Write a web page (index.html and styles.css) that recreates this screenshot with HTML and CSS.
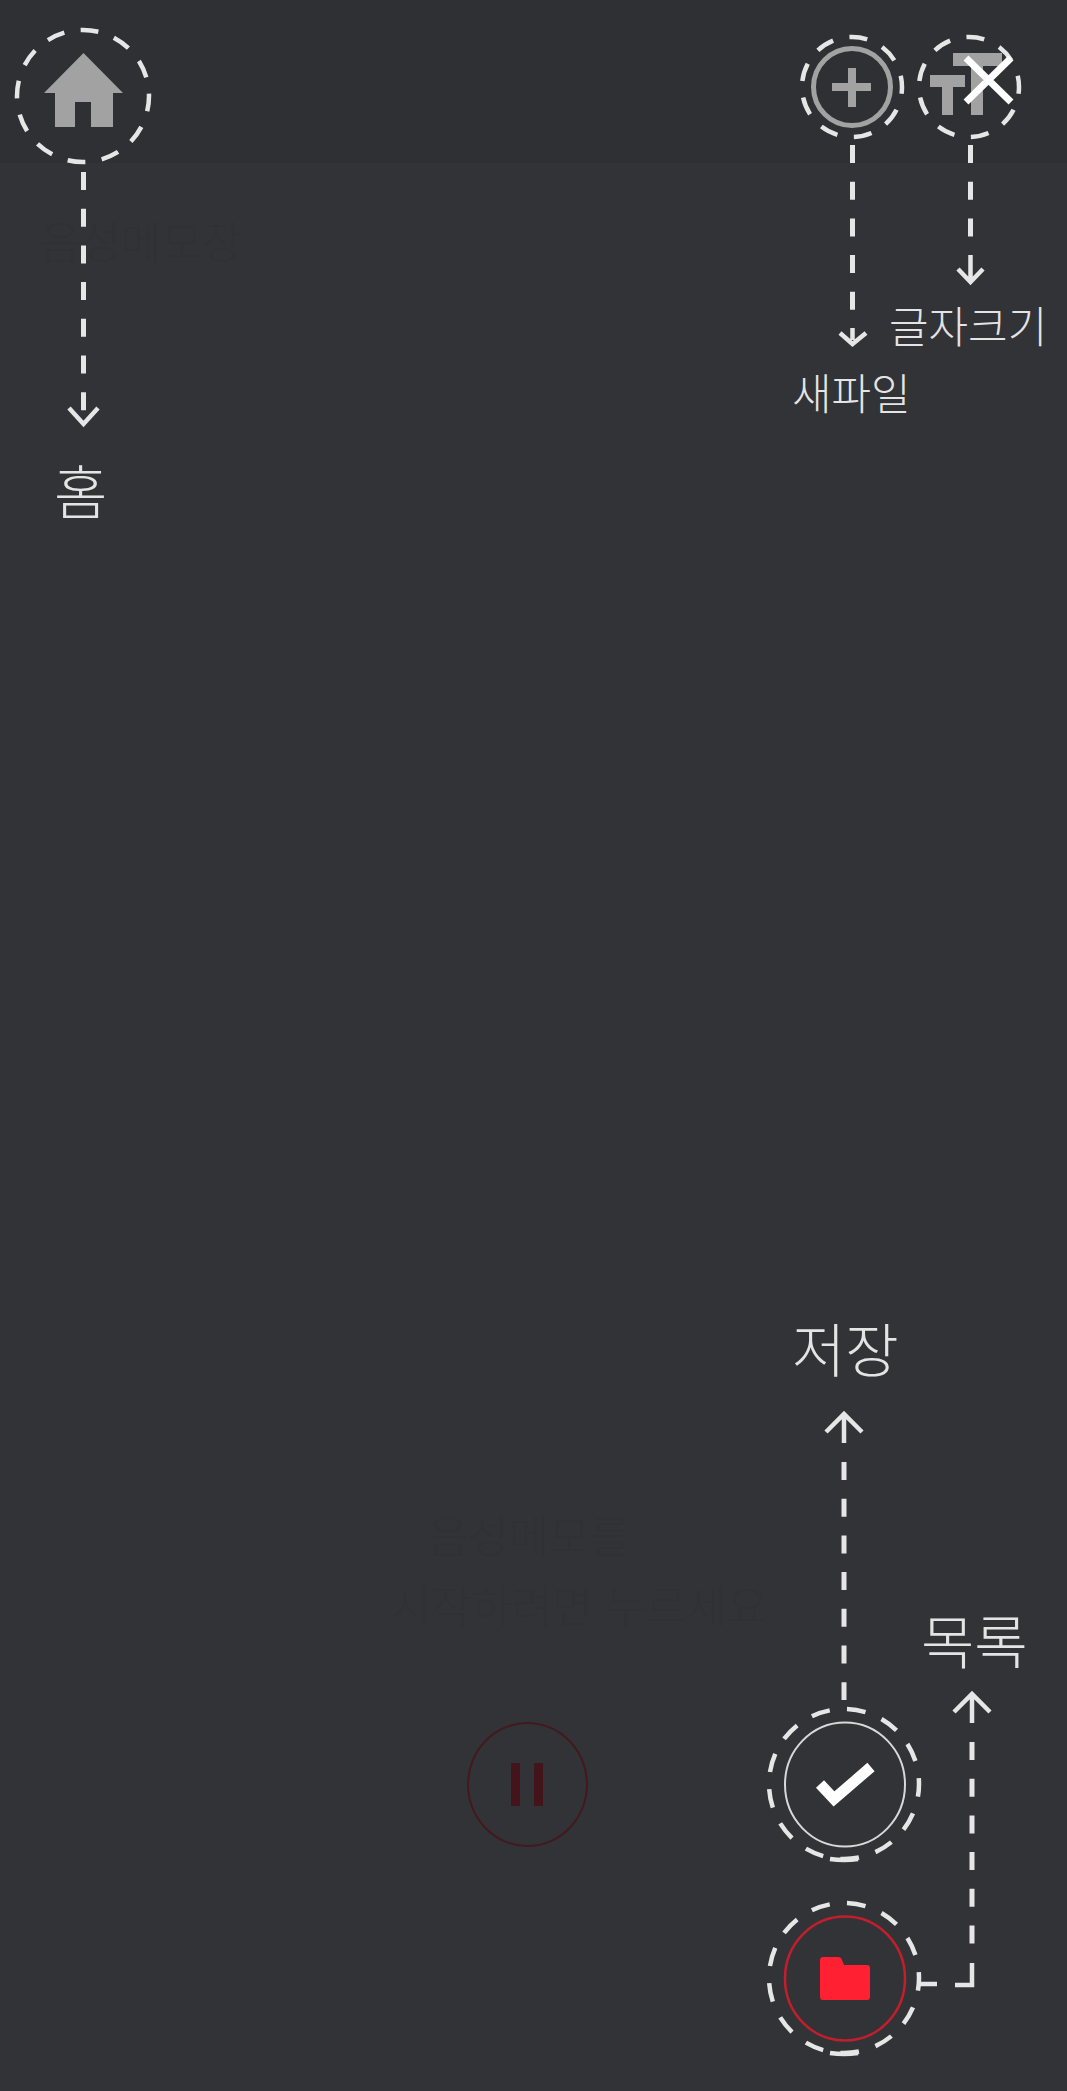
FILE: index.html
```html
<!DOCTYPE html>
<html lang="ko">
<head>
  <meta charset="UTF-8" />
  <meta name="viewport" content="width=device-width, initial-scale=1.0"/>
  <title>메모 도움말</title>
  <link rel="stylesheet" href="styles.css">
</head>
<body>
  <div class="screen">
    <header class="topbar">
      <svg class="home-icon" viewBox="0 0 80 74"><path d="M39.500 0L79 40H69V74H47V49H31V74H11V40H0Z"/></svg>
      <div class="topbar-right">
        <svg class="plus-icon" viewBox="0 0 84 84"><circle cx="42" cy="42" r="38.500" fill="none" stroke="#a2a2a2" stroke-width="5"/><path d="M38 23h8v15h15v8H46v16h-8V46H22v-8h16z" fill="#a2a2a2"/></svg>
        <svg class="text-icon" viewBox="0 0 72 62"><path d="M23 0H72V13H53V62H41V13H23ZM0 22H35V34H23V62H12V34H0Z" fill="#a2a2a2"/></svg>
      </div>
    </header>

    <p class="faint-title">음성메모장</p>

    <div class="center-block">
      <p class="faint-line">음성메모를</p>
      <p class="faint-line faint-line-wide">시작하려면 누르세요</p>
      <div class="pause-btn"><span></span><span></span></div>
    </div>

    <!-- help overlay -->
    <svg class="overlay" viewBox="0 0 1067 2091">
      <circle class="ring-dash ring-home" pathLength="12" cx="83" cy="96" r="66"/>
      <circle class="ring-dash ring-top" pathLength="9" cx="852" cy="87" r="50"/>
      <circle class="ring-dash ring-top" pathLength="9" cx="969" cy="87" r="50"/>
      <circle class="ring-dash ring-big" pathLength="13" cx="844" cy="1784" r="75"/>
      <circle class="ring-dash ring-big" pathLength="13" cx="844" cy="1978" r="75"/>
      <g class="dash">
        <path d="M83.500 172V412"/>
        <path d="M852.500 145V311"/>
        <path d="M970.500 145V237"/>
        <path d="M844 1462V1700"/>
        <path d="M972 1742V1945"/>
      </g>
      <g class="arrow">
        <path d="M69 408L83.500 424L98 408"/>
        <path d="M840 333L852.500 344L866 333M852.500 328V340"/>
        <path d="M958 269L970.500 282L983 269M970.500 255V280"/>
        <path d="M826 1432L844 1414L862 1432M844 1416V1443"/>
        <path d="M954 1712L972 1694L990 1712M972 1696V1723"/>
        <path d="M972 1963V1985H955M937 1984H918"/>
        <path d="M830 1859Q844 1861 858 1859"/>
        <path d="M830 2053Q844 2055 858 2053"/>
      </g>
      <path class="close-x" d="M966 58L1011 102M1011 58L966 102"/>
      <ellipse class="ring" cx="845" cy="1784.500" rx="60" ry="62"/>
      <path class="check" d="M820 1784L834 1799L871 1767"/>
      <ellipse class="ring-red" cx="845" cy="1978.500" rx="60" ry="62"/>
      <path class="folder" d="M823 1957h15q3 0 4 3l2 5h23q3 0 3 3v29q0 3-3 3h-44q-3 0-3-3v-37q0-3 3-3z"/>
    </svg>

    <span class="tip tip-home">홈</span>
    <span class="tip tip-new">새파일</span>
    <span class="tip tip-size">글자크기</span>
    <span class="tip tip-save">저장</span>
    <span class="tip tip-list">목록</span>
  </div>
</body>
</html>
```

FILE: styles.css
```css
html, body {
  margin: 0;
  padding: 0;
  background-color: #323337;
}
.screen {
  position: relative;
  width: 1067px;
  height: 2091px;
  overflow: hidden;
  font-family: "Noto Sans CJK KR", "Noto Sans", sans-serif;
  background-color: #323337;
}
.topbar {
  height: 163px;
  box-sizing: border-box;
  padding: 53px 65px 0 44px;
  display: flex;
  justify-content: space-between;
  align-items: flex-start;
  background-color: #2f3034;
}
.home-icon {
  width: 80px;
  height: 74px;
  fill: #a2a2a2;
}
.topbar-right {
  display: flex;
  align-items: flex-start;
  gap: 36px;
}
.plus-icon {
  width: 84px;
  height: 84px;
  margin-top: -8px;
}
.text-icon {
  width: 72px;
  height: 62px;
}
.faint-title {
  margin: 42px 0 0 40px;
  font-size: 44px;
  font-weight: 300;
  line-height: 70px;
  color: #303135;
}
.center-block {
  margin-top: 1224px;
  display: flex;
  flex-direction: column;
  align-items: center;
  width: 1058px;
}
.faint-line {
  margin: 0;
  font-size: 44px;
  font-weight: 300;
  line-height: 70px;
  color: #303135;
}
.faint-line-wide {
  margin-left: 100px;
}
.pause-btn {
  margin-top: 83px;
  margin-left: -4px;
  width: 121px;
  height: 125px;
  box-sizing: border-box;
  border: 2px solid #43191f;
  border-radius: 50%;
  display: flex;
  justify-content: center;
  align-items: center;
  gap: 14px;
}
.pause-btn span {
  width: 9px;
  height: 43px;
  background-color: #43151b;
}
.overlay {
  position: absolute;
  left: 0;
  top: 0;
  width: 1067px;
  height: 2091px;
}
.ring-dash {
  fill: none;
  stroke: #e6e6e6;
  stroke-width: 4.500px;
  stroke-dasharray: 0.52 0.48;
}
.ring-home { stroke-dashoffset: 0.07; }
.ring-top { stroke-dashoffset: 0.325; }
.ring-big { stroke-dashoffset: 0.166; }
.dash {
  fill: none;
  stroke: #e6e6e6;
  stroke-width: 5px;
  stroke-dasharray: 18 18.700;
}
.arrow {
  fill: none;
  stroke: #e6e6e6;
  stroke-width: 4.500px;
}
.close-x {
  fill: none;
  stroke: #fff;
  stroke-width: 7px;
}
.ring {
  fill: none;
  stroke: #d8d8d8;
  stroke-width: 2px;
}
.ring-red {
  fill: none;
  stroke: #c31e2c;
  stroke-width: 2.500px;
}
.check {
  fill: none;
  stroke: #fff;
  stroke-width: 11px;
}
.folder {
  fill: #ff2132;
}
.tip {
  position: absolute;
  color: #e4e4e4;
  font-weight: 300;
  white-space: nowrap;
  line-height: 1;
}
.tip-home { left: 54px; top: 460px; font-size: 58px; }
.tip-new { left: 792px; top: 370px; font-size: 43px; }
.tip-size { left: 889px; top: 303px; font-size: 43px; }
.tip-save { left: 792px; top: 1318px; font-size: 58px; }
.tip-list { left: 921px; top: 1610px; font-size: 58px; }
```
